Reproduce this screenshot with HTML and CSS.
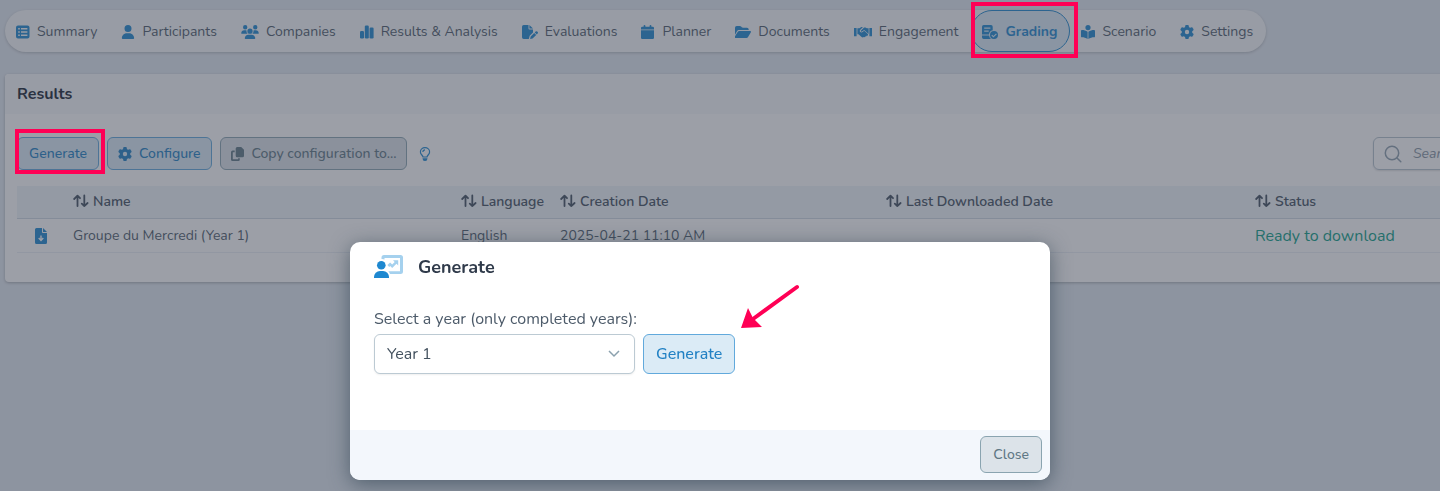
FILE: index.html
```
<!DOCTYPE html>
<html lang="en">
<head>
    <meta charset="UTF-8">
    <meta name="viewport" content="width=device-width, initial-scale=1">
    <title>Grading</title>
    <link rel="stylesheet" href="styles.css">
</head>
<body>

<svg class="sprite" aria-hidden="true">
    <symbol id="i-list" viewBox="0 0 14 14"><path fill-rule="evenodd" d="M2 0.5h9.500a2 2 0 0 1 2 2v9a2 2 0 0 1-2 2H2a2 2 0 0 1-2-2v-9a2 2 0 0 1 2-2zM2.200 3v1.600h1.600V3zm2.800 0v1.500h6.400V3zm-2.800 3.200v1.600h1.600V6.200zm2.800 0v1.500h6.400V6.200zm-2.800 3.200V11h1.600V9.400zm2.800 0v1.500h6.400V9.400z"/></symbol>
    <symbol id="i-user" viewBox="0 0 448 512"><path d="M224 256A128 128 0 1 0 224 0a128 128 0 1 0 0 256zm-45.700 48C79.800 304 0 383.800 0 482.300C0 498.700 13.300 512 29.700 512H418.300c16.400 0 29.700-13.300 29.700-29.700C448 383.800 368.200 304 269.700 304H178.300z"/></symbol>
    <symbol id="i-users" viewBox="0 0 640 512"><path d="M144 0a80 80 0 1 1 0 160A80 80 0 1 1 144 0zM512 0a80 80 0 1 1 0 160A80 80 0 1 1 512 0zM0 298.700C0 239.800 47.800 192 106.700 192h42.700c15.900 0 31 3.500 44.600 9.700c-1.300 7.200-1.900 14.700-1.900 22.300c0 38.200 16.800 72.500 43.300 96H21.300C9.600 320 0 310.400 0 298.700zM405.300 320h-.7c26.600-23.500 43.300-57.800 43.300-96c0-7.600-.7-15-1.900-22.300c13.600-6.300 28.700-9.700 44.600-9.700h42.700C592.200 192 640 239.800 640 298.700c0 11.800-9.600 21.300-21.300 21.300H405.300zM224 224a96 96 0 1 1 192 0 96 96 0 1 1-192 0zM128 485.300C128 411.700 187.700 352 261.300 352H378.700C452.300 352 512 411.700 512 485.300c0 14.700-11.900 26.700-26.700 26.700H154.700c-14.700 0-26.700-11.900-26.700-26.700z"/></symbol>
    <symbol id="i-chart" viewBox="0 0 14 14"><rect x="0" y="6" width="4" height="7.500" rx="1.200"/><rect x="4.800" y="0.500" width="4" height="13" rx="1.200"/><rect x="9.600" y="2.500" width="4" height="11" rx="1.200"/></symbol>
    <symbol id="i-filepen" viewBox="0 0 16 14"><path d="M1.700 0H6.500v3.600a.9.9 0 0 0 .9.9H11v3L7.700 10.700 6.800 14H1.700A1.700 1.700 0 0 1 0 12.300V1.700A1.700 1.700 0 0 1 1.700 0zM7.400 0 11 3.600H7.400zM13.600 6.600a1.200 1.200 0 0 1 1.700 0l.3.300a1.200 1.200 0 0 1 0 1.700l-.8.800-2-2zM12.200 8l2 2-3.600 3.500-2.500.5.600-2.500z"/></symbol>
    <symbol id="i-calendar" viewBox="0 0 14 14"><path d="M3.500 0a.9.9 0 0 1 .9.900V1.800h4.200V.9a.9.900 0 0 1 1.800 0v.9h1.300A1.300 1.300 0 0 1 13 3.100v1.300H0V3.100a1.300 1.300 0 0 1 1.300-1.300h1.300V.9A.9.900 0 0 1 3.500 0zM0 5.200h13v7.500A1.300 1.300 0 0 1 11.700 14H1.300A1.300 1.300 0 0 1 0 12.700z"/></symbol>
    <symbol id="i-folder" viewBox="0 0 16 14"><path d="M1.700 1h3.200c.5 0 .9.200 1.200.5l.7.700c.3.300.7.500 1.200.5h4a1.700 1.700 0 0 1 1.700 1.700V5H4.200c-.9 0-1.800.5-2.200 1.300L0 9.800V2.700A1.700 1.700 0 0 1 1.700 1zM2.800 6.700c.3-.5.800-.8 1.400-.8h11c.7 0 1.100.7.700 1.300l-3 5c-.3.500-.8.800-1.400.8H.5c-.6 0-1-.7-.7-1.300z"/></symbol>
    <symbol id="i-handshake" viewBox="0 0 18 14"><path d="M0 3h2.600v8.200H0zM15.400 3H18v8.200h-2.600zM3.400 3.300h2L7 2.300c.6-.3 1.200-.3 1.800 0L6.300 4.700c-.7.700-.7 1.700 0 2.300.6.600 1.600.6 2.300 0l1.600-1.200 3.600 3.300c.4.500.4 1 0 1.400-.3.300-.7.300-1 .1 0 .7-.8 1.200-1.500.8-.3.700-1.100 1-1.800.6-.5.500-1.300.5-1.900 0L4.500 9.300H3.400zM14.600 3.300v6c-.1-.3-.2-.6-.5-.800L10.200 4.900 7.900 6.500c-.3.200-.7.200-.9-.1-.3-.3-.2-.6 0-.9l2.600-2.600c.5-.5 1.200-.6 1.800-.3l1.500.7z"/></symbol>
    <symbol id="i-grading" viewBox="0 0 16 14"><path fill-rule="evenodd" d="M1.700 0H9a1.700 1.700 0 0 1 1.700 1.700v3.500A4.600 4.600 0 0 0 7 9.500H0V1.700A1.700 1.700 0 0 1 1.700 0zM2.200 2.500v1.300h6.200V2.500zm0 3v1.300h4.500V5.500zM0 10.500h7.100A4.700 4.700 0 0 0 9 14H1.700A1.700 1.700 0 0 1 0 12.300z"/><path fill-rule="evenodd" d="M12 6a4 4 0 1 1 0 8 4 4 0 0 1 0-8zm2 2.400-2.600 2.500-1.200-1.200-.8.800 2 2 3.400-3.300z"/></symbol>
    <symbol id="i-reader" viewBox="0 0 14 14"><path d="M7 0a2.600 2.600 0 1 1 0 5.200A2.600 2.600 0 0 1 7 0zM.9 5C2.800 5 5 5.500 6.600 6.700V14C5 12.900 2.800 12.300.9 12.300A.9.9 0 0 1 0 11.400V5.900A.9.9 0 0 1 .9 5zM13.100 5C11.200 5 9 5.500 7.400 6.700V14c1.600-1.100 3.800-1.700 5.700-1.700a.9.9 0 0 0 .9-.9V5.900a.9.9 0 0 0-.9-.9z"/></symbol>
    <symbol id="i-gear" viewBox="0 0 512 512"><path d="M495.900 166.600c3.200 8.700 .5 18.400-6.400 24.600l-43.300 39.400c1.100 8.300 1.700 16.800 1.700 25.400s-.6 17.100-1.700 25.400l43.300 39.400c6.900 6.200 9.600 15.900 6.400 24.600c-4.400 11.900-9.700 23.300-15.800 34.300l-4.700 8.100c-6.600 11-14 21.400-22.100 31.200c-5.900 7.200-15.700 9.600-24.500 6.800l-55.700-17.700c-13.400 10.300-28.200 18.900-44 25.400l-12.500 57.100c-2 9.100-9 16.300-18.200 17.800c-13.800 2.300-28 3.500-42.500 3.500s-28.700-1.200-42.500-3.500c-9.200-1.500-16.200-8.700-18.200-17.800l-12.500-57.100c-15.800-6.500-30.600-15.100-44-25.400L83.100 425.900c-8.800 2.800-18.600 .3-24.500-6.800c-8.100-9.800-15.500-20.200-22.100-31.200l-4.700-8.100c-6.100-11-11.400-22.400-15.800-34.300c-3.200-8.700-.5-18.400 6.400-24.600l43.300-39.400C64.600 273.100 64 264.600 64 256s.6-17.100 1.700-25.400L22.400 191.200c-6.900-6.200-9.600-15.900-6.400-24.600c4.400-11.900 9.700-23.300 15.800-34.300l4.700-8.100c6.600-11 14-21.400 22.100-31.200c5.900-7.200 15.700-9.600 24.500-6.800l55.700 17.700c13.400-10.300 28.200-18.900 44-25.400l12.500-57.100c2-9.100 9-16.300 18.200-17.800C227.300 1.200 241.500 0 256 0s28.700 1.200 42.500 3.500c9.200 1.500 16.200 8.700 18.200 17.800l12.500 57.100c15.800 6.500 30.600 15.100 44 25.400l55.700-17.700c8.800-2.800 18.600-.3 24.500 6.800c8.100 9.800 15.500 20.200 22.100 31.200l4.700 8.100c6.100 11 11.400 22.400 15.800 34.300zM256 336a80 80 0 1 0 0-160 80 80 0 1 0 0 160z"/></symbol>
    <symbol id="i-copy" viewBox="0 0 14 14"><path d="M6.200 0h4L13 2.800v6a1.500 1.500 0 0 1-1.500 1.500H6.200a1.500 1.500 0 0 1-1.500-1.500V1.500A1.500 1.500 0 0 1 6.200 0zM1.700 3.500h2v1.700H1.800v7.100h5.300v-1h1.700v1.200A1.500 1.500 0 0 1 7.300 14H1.600A1.600 1.600 0 0 1 0 12.400V5.200a1.700 1.700 0 0 1 1.700-1.700z"/></symbol>
    <symbol id="i-bulb" viewBox="0 0 12 14"><path fill="none" stroke="currentColor" stroke-width="1.200" d="M4 10C3.800 8.300 1.400 7.300 1.400 4.900a4.600 4.300 0 0 1 9.200 0C10.600 7.300 8.200 8.300 8 10zM3.900 4.900a2.100 2 0 0 1 2.100-2"/><path d="M3.600 11.200h4.800v.6A2.200 2.200 0 0 1 6.200 14h-.4a2.200 2.200 0 0 1-2.200-2.200z"/></symbol>
    <symbol id="i-sort" viewBox="0 0 16 14"><path fill="none" stroke="currentColor" stroke-width="1.800" stroke-linecap="round" stroke-linejoin="round" d="M4.500 12V2M1.200 5l3.300-3.400L7 4.200M11.300 1.500v10.500M8.800 9.600l2.500 2.500L14.600 9"/></symbol>
    <symbol id="i-filedown" viewBox="0 0 12 16"><path fill-rule="evenodd" d="M1.500 0H7v4a1 1 0 0 0 1 1h4v9.500a1.500 1.500 0 0 1-1.500 1.500h-9A1.500 1.500 0 0 1 0 14.500v-13A1.500 1.500 0 0 1 1.500 0zM5.300 7.500v3.200L4.200 9.600l-1 1L6 13.400l2.800-2.800-1-1-1.100 1.100V7.500zM8 0l4 4H8z"/></symbol>
    <symbol id="i-search" viewBox="0 0 18 18"><g fill="none" stroke="currentColor" stroke-width="1.500" stroke-linecap="round"><circle cx="8" cy="8" r="6.700"/><path d="m13 13 3.800 3.800"/></g></symbol>
</svg>

<div class="page">
    <nav class="tabs">
        <a href="#"><svg class="icon"><use href="#i-list"/></svg>Summary</a>
        <a href="#"><svg class="icon"><use href="#i-user"/></svg>Participants</a>
        <a href="#"><svg class="icon icon-wide"><use href="#i-users"/></svg>Companies</a>
        <a href="#"><svg class="icon"><use href="#i-chart"/></svg>Results &amp; Analysis</a>
        <a href="#"><svg class="icon icon-mid"><use href="#i-filepen"/></svg>Evaluations</a>
        <a href="#"><svg class="icon"><use href="#i-calendar"/></svg>Planner</a>
        <a href="#"><svg class="icon icon-mid"><use href="#i-folder"/></svg>Documents</a>
        <a href="#"><svg class="icon icon-wide"><use href="#i-handshake"/></svg>Engagement</a>
        <a href="#" class="active"><svg class="icon icon-mid"><use href="#i-grading"/></svg>Grading</a>
        <a href="#"><svg class="icon"><use href="#i-reader"/></svg>Scenario</a>
        <a href="#"><svg class="icon"><use href="#i-gear"/></svg>Settings</a>
    </nav>

    <main class="card">
        <h3 class="card-header">Results</h3>
        <div class="card-body">
            <div class="toolbar">
                <button type="button" class="btn btn-primary marked">Generate</button>
                <button type="button" class="btn btn-primary btn-icon"><svg class="icon"><use href="#i-gear"/></svg>Configure</button>
                <button type="button" class="btn btn-secondary btn-icon"><svg class="icon"><use href="#i-copy"/></svg>Copy configuration to...</button>
                <a href="#" class="hint" aria-label="Help"><svg class="icon"><use href="#i-bulb"/></svg></a>
                <label class="search">
                    <svg><use href="#i-search"/></svg>
                    <input type="search" placeholder="Search..." aria-label="Search">
                </label>
            </div>
            <table>
                <colgroup>
                    <col class="col-file"><col class="col-name"><col class="col-lang"><col class="col-created"><col class="col-last"><col>
                </colgroup>
                <thead>
                    <tr>
                        <th></th>
                        <th><svg class="sort"><use href="#i-sort"/></svg>Name</th>
                        <th><svg class="sort"><use href="#i-sort"/></svg>Language</th>
                        <th><svg class="sort"><use href="#i-sort"/></svg>Creation Date</th>
                        <th><svg class="sort"><use href="#i-sort"/></svg>Last Downloaded Date</th>
                        <th><svg class="sort"><use href="#i-sort"/></svg>Status</th>
                    </tr>
                </thead>
                <tbody>
                    <tr>
                        <td class="file"><a href="#" aria-label="Download"><svg><use href="#i-filedown"/></svg></a></td>
                        <td>Groupe du Mercredi (Year 1)</td>
                        <td>English</td>
                        <td>2025-04-21 11:10 AM</td>
                        <td></td>
                        <td class="status">Ready to download</td>
                    </tr>
                </tbody>
            </table>
        </div>
    </main>
</div>

<div class="backdrop"></div>

<div class="modal-wrap">
    <div class="modal" role="dialog" aria-labelledby="modal-title">
        <div class="modal-header">
            <svg viewBox="0 0 30 24">
                <path fill="#a5d1ee" fill-rule="evenodd" d="M10 0h16.500A2.500 2.500 0 0 1 29 2.500v14a2.500 2.500 0 0 1-2.500 2.500H16a8 8 0 0 0-1.800-2.700H26V3H10.500v1.500A6 6 0 0 0 7.500 4V2.500A2.500 2.500 0 0 1 10 0z"/>
                <path fill="#a5d1ee" d="M19 5.200h5.200v5.200l-1.700-1.700-4.300 4.200-2-2-1 1-1.800-1.800 2.700-2.700 2.100 2.100 2.500-2.600z"/>
                <circle cx="7.300" cy="10.200" r="4.300" fill="#1e88d0"/>
                <path fill="#1e88d0" d="M6 16h3a6 6 0 0 1 6 6v1H0v-1a6 6 0 0 1 6-6z"/>
            </svg>
            <h2 id="modal-title">Generate</h2>
        </div>
        <div class="modal-body">
            <label for="year">Select a year (only completed years):</label>
            <div class="field">
                <div class="select">
                    <select id="year"><option>Year 1</option></select>
                    <svg viewBox="0 0 12 8"><path d="m1 1 5 5 5-5"/></svg>
                </div>
                <button type="button" class="btn btn-primary btn-lg">Generate</button>
                <svg class="arrow" viewBox="0 0 60 48"><path class="line" d="M56 4 12 36"/><path d="M0 45 7 25l5 10 9 9z"/></svg>
            </div>
        </div>
        <div class="modal-footer">
            <button type="button" class="btn btn-secondary btn-close">Close</button>
        </div>
    </div>
</div>

</body>
</html>
```
FILE: styles.css
```
* { box-sizing: border-box; }
body {
    margin: 0;
    background: #e1e8f0;
    color: #4d5b6a;
    font-family: Nunito, Lato, sans-serif;
    font-size: 14px;
    line-height: 20px;
    overflow: hidden;
    min-height: 100vh;
}
a { color: inherit; text-decoration: none; }
svg { fill: currentColor; flex: none; }
.sprite { position: absolute; width: 0; height: 0; }
.page { padding: 10px 0 0 5px; }

.icon { width: 14px; height: 14px; }
.icon-mid { width: 16px; }
.icon-wide { width: 18px; }

/* tabs */
.tabs {
    display: flex;
    width: max-content;
    height: 42px;
    background: #f7f9fa;
    border-radius: 21px;
    box-shadow: 0 1px 3px #0003;
}
.tabs a {
    display: flex;
    align-items: center;
    gap: 7px;
    padding: 1px 12px 0 10px;
    border: 1px solid transparent;
    border-radius: 21px;
}
.tabs .icon { color: #1e88d0; }
.tabs .active {
    position: relative;
    background: #dbebf6;
    border-color: #1e88d0;
    color: #1e88d0;
    font-weight: 700;
}

/* highlight frames */
.tabs .active::after, .marked::after {
    content: "";
    position: absolute;
    border: 4px solid #ff0055;
    z-index: 20;
}
.tabs .active::after { inset: -9px -9px -7px -1px; }
.marked::after { inset: -9px -7px -5px -3px; }

/* card */
.card {
    margin: 22px -160px 0 0;
    background: #fff;
    border-radius: 4px;
    box-shadow: 0 1px 3px #0004;
}
.card-header {
    margin: 0;
    padding: 10px 12px;
    background: #f7f9fa;
    border-radius: 4px 4px 0 0;
    color: #182433;
    font-size: 16px;
    font-weight: 700;
}
.card-body { padding: 23px 12px 29px; }
.toolbar { display: flex; align-items: center; gap: 8px; margin-bottom: 16px; }

.btn {
    display: flex;
    align-items: center;
    gap: 7px;
    height: 33px;
    padding: 0 11px;
    border: 1px solid;
    border-radius: 6px;
    font: inherit;
    font-weight: 500;
    cursor: pointer;
}
.btn-icon { padding: 0 10px; }
.btn-primary { background: #dbebf6; border-color: #61a9dc; color: #2181c4; }
.btn-secondary { background: #dce3e9; border-color: #8aa4b0; color: #5f7885; }
.btn-lg { height: 40px; padding: 0 12px; font-size: 16px; }
.btn-close { height: 37px; padding: 0 12px; }
.marked { position: relative; }
.hint { display: flex; color: #1e88d0; padding: 0 3px; }

.search {
    display: flex;
    align-items: center;
    gap: 11px;
    width: 215px;
    height: 33px;
    margin-left: auto;
    padding: 0 10px;
    border: 1px solid #b4c2cc;
    border-radius: 6px;
    box-shadow: 0 1px 2px #0002;
    color: #8fa0ae;
}
.search svg { width: 18px; height: 18px; }
.search input {
    width: 100%;
    padding: 0;
    border: 0;
    outline: 0;
    background: none;
    font: inherit;
}
.search input::placeholder { color: #8795a3; font-style: italic; }

/* table */
table { width: 100%; table-layout: fixed; border-collapse: collapse; }
.col-file { width: 48px; }
.col-name { width: 388px; }
.col-lang { width: 99px; }
.col-created { width: 326px; }
.col-last { width: 369px; }
th, td { padding: 6px 8px; text-align: left; white-space: nowrap; }
th { background: #eff4f8; border-bottom: 1px solid #cfd8e2; color: #425060; font-weight: 600; }
td { padding: 7px 8px 6px; border-bottom: 1px solid #eaeef4; }
.sort { width: 16px; height: 14px; margin-right: 4px; vertical-align: -2px; }
.file a { display: flex; justify-content: center; color: #1e88d0; }
.file svg { width: 12px; height: 16px; }
.status { color: #0e9f88; font-size: 16px; }

/* modal */
.backdrop { position: fixed; inset: 0; background: rgba(57, 63, 80, 0.5); z-index: 10; }
.modal-wrap {
    position: fixed;
    inset: 0;
    z-index: 30;
    display: flex;
    justify-content: center;
    align-items: flex-start;
    padding: 242px 40px 0 0;
    pointer-events: none;
}
.modal {
    width: 100%;
    max-width: 700px;
    background: #fff;
    border-radius: 10px;
    box-shadow: 0 4px 20px rgba(40, 60, 75, 0.6);
    overflow: hidden;
    pointer-events: auto;
}
.modal-header { display: flex; align-items: center; gap: 14px; padding: 12px 24px; height: 50px; }
.modal-header svg { width: 30px; height: 24px; }
.modal-header h2 { margin: 0; color: #2f3a4a; font-size: 18px; font-weight: 700; }
.modal-body { padding: 15px 24px 56px; font-size: 16px; line-height: 24px; }
.modal-body label { display: block; margin-bottom: 3px; }
.field { display: flex; gap: 8px; }
.select { position: relative; width: 261px; }
.select select {
    width: 100%;
    height: 40px;
    padding: 0 12px;
    appearance: none;
    border: 1px solid #bccad3;
    border-radius: 6px;
    background: #fff;
    box-shadow: 0 1px 2px #0001;
    color: #44525f;
    font: inherit;
}
.select svg {
    position: absolute;
    top: 16px;
    right: 15px;
    width: 12px;
    height: 8px;
    fill: none;
    stroke: #8ba1ae;
    stroke-width: 1.5;
}
.arrow { width: 60px; height: 48px; margin: -51px 0 0 -2px; fill: #ff0055; }
.arrow .line { stroke: #ff0055; stroke-width: 4; stroke-linecap: round; }
.modal-footer { display: flex; justify-content: flex-end; padding: 6px 8px 7px; background: #f3f7fc; }
```
